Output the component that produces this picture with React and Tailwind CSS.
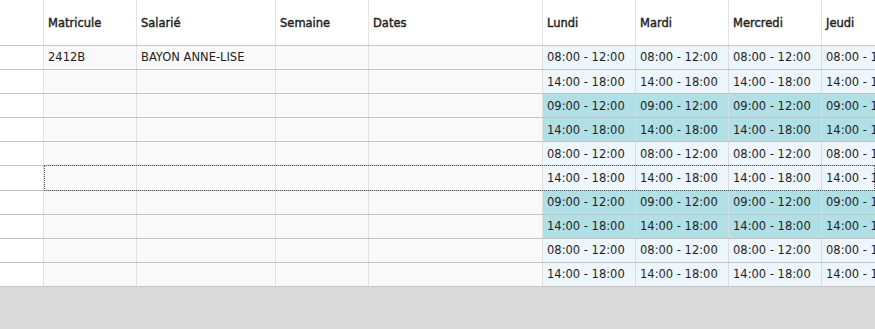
const cols = [
  { key: 'sel', label: '', w: 'w-[44px]' },
  { key: 'mat', label: 'Matricule', w: 'w-[93px]' },
  { key: 'sal', label: 'Salarié', w: 'w-[139px]' },
  { key: 'sem', label: 'Semaine', w: 'w-[93px]' },
  { key: 'dat', label: 'Dates', w: 'w-[174px]' },
  { key: 'lun', label: 'Lundi', w: 'w-[93px]' },
  { key: 'mar', label: 'Mardi', w: 'w-[93px]' },
  { key: 'mer', label: 'Mercredi', w: 'w-[93px]' },
  { key: 'jeu', label: 'Jeudi', w: 'w-[93px]' },
]

const days = ['lun', 'mar', 'mer', 'jeu']

const rows = [
  { mat: '2412B', sal: 'BAYON ANNE-LISE', time: '08:00 - 12:00', alt: false },
  { time: '14:00 - 18:00', alt: false },
  { time: '09:00 - 12:00', alt: true },
  { time: '14:00 - 18:00', alt: true },
  { time: '08:00 - 12:00', alt: false },
  { time: '14:00 - 18:00', alt: false, focus: true },
  { time: '09:00 - 12:00', alt: true },
  { time: '14:00 - 18:00', alt: true },
  { time: '08:00 - 12:00', alt: false },
  { time: '14:00 - 18:00', alt: false },
]

export default function App() {
  return (
    <div
      className="w-[875px] h-[329px] overflow-hidden bg-[#dadada] text-[11.5px] text-[#1e1e1e]"
      style={{ fontFamily: '"DejaVu Sans", Verdana, sans-serif' }}
    >
      {/* header */}
      <div className="flex h-[46px] bg-white border-b border-[#c6c6c6]">
        {cols.map((c) => (
          <div
            key={c.key}
            className={`${c.w} shrink-0 border-r border-[#e3e3e3] px-[4px] pt-[15px] text-[#222] [-webkit-text-stroke:0.4px_#222]`}
          >
            {c.label}
          </div>
        ))}
      </div>

      {/* body */}
      {rows.map((r, i) => (
        <div key={i} className="relative flex h-[24.1px] border-b border-[#c4c4c4]">
          {cols.map((c) => {
            const isDay = days.includes(c.key)
            let bg = 'bg-[#f9f9f9]'
            if (c.key === 'sel') bg = 'bg-white'
            if (isDay) bg = r.alt ? 'bg-[#b0e0e6]' : 'bg-[#eef6fd]'
            return (
              <div
                key={c.key}
                className={`${c.w} ${bg} shrink-0 border-r ${isDay ? 'border-[#d6dde4]' : 'border-[#e1e1e1]'} px-[4px] pt-[1px] flex items-center whitespace-nowrap overflow-hidden`}
              >
                {isDay ? r.time : r[c.key] || ''}
              </div>
            )
          })}
          {r.focus && (
            <div className="absolute left-[44px] right-0 top-[-1px] bottom-[-1px] border border-dotted border-[#555] pointer-events-none" />
          )}
        </div>
      ))}
    </div>
  )
}
